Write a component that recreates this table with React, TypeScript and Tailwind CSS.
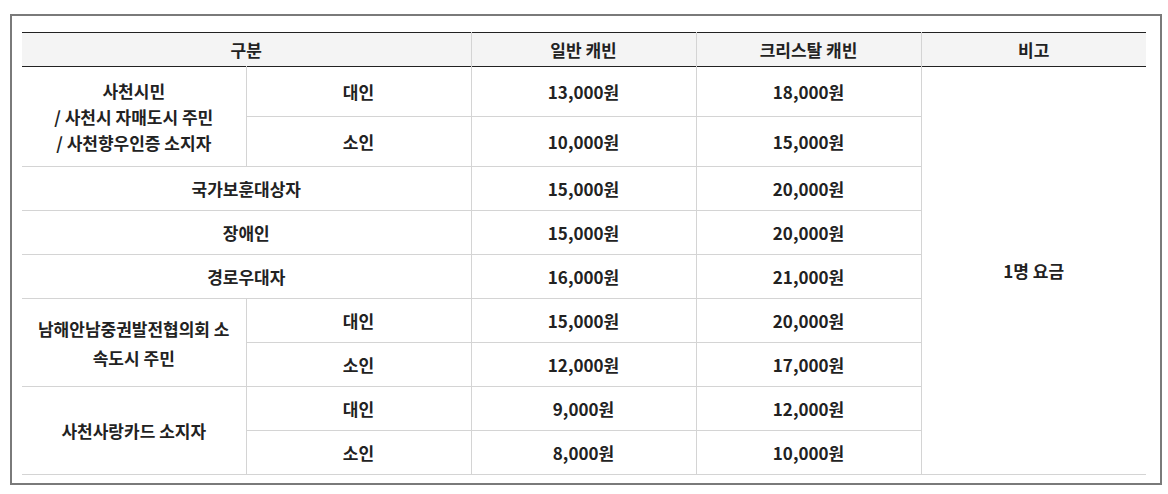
import React from "react";

const font = { fontFamily: '"Noto Sans CJK KR", "Noto Sans", sans-serif' };

export default function App() {
  const cell = "border-r border-[#d4d4d4] text-center align-middle";
  return (
    <div className="bg-white w-[1168px] h-[494px] pt-[14px] pl-[10px]" style={font}>
      <div className="w-[1152px] h-[471px] border-2 border-[#7a7a7a] pt-[16px] pl-[10px]">
        <table className="w-[1124px] table-fixed border-collapse text-[17px] font-bold text-[#222]">
          <colgroup>
            <col className="w-[224px]" />
            <col className="w-[225px]" />
            <col className="w-[225px]" />
            <col className="w-[225px]" />
            <col className="w-[225px]" />
          </colgroup>
          <thead>
            <tr className="h-[34px] bg-[#f4f4f4] border-t border-b border-[#222]">
              <th colSpan={2} className="border-r border-[#d4d4d4] font-bold">구분</th>
              <th className="border-r border-[#d4d4d4] font-bold">일반 캐빈</th>
              <th className="border-r border-[#d4d4d4] font-bold">크리스탈 캐빈</th>
              <th className="font-bold">비고</th>
            </tr>
          </thead>
          <tbody>
            <tr className="h-[50px] border-b border-[#d4d4d4]">
              <td rowSpan={2} className={`${cell} leading-[26px]`}>
                사천시민
                <br />/ 사천시 자매도시 주민
                <br />/ 사천향우인증 소지자
              </td>
              <td className={cell}>대인</td>
              <td className={cell}>13,000원</td>
              <td className={cell}>18,000원</td>
              <td rowSpan={9} className="text-center align-middle">1명 요금</td>
            </tr>
            <tr className="h-[50px] border-b border-[#d4d4d4]">
              <td className={cell}>소인</td>
              <td className={cell}>10,000원</td>
              <td className={cell}>15,000원</td>
            </tr>
            <tr className="h-[44px] border-b border-[#d4d4d4]">
              <td colSpan={2} className={cell}>국가보훈대상자</td>
              <td className={cell}>15,000원</td>
              <td className={cell}>20,000원</td>
            </tr>
            <tr className="h-[44px] border-b border-[#d4d4d4]">
              <td colSpan={2} className={cell}>장애인</td>
              <td className={cell}>15,000원</td>
              <td className={cell}>20,000원</td>
            </tr>
            <tr className="h-[44px] border-b border-[#d4d4d4]">
              <td colSpan={2} className={cell}>경로우대자</td>
              <td className={cell}>16,000원</td>
              <td className={cell}>21,000원</td>
            </tr>
            <tr className="h-[44px] border-b border-[#d4d4d4]">
              <td rowSpan={2} className={`${cell} leading-[29px] px-[12px] break-all`}>
                남해안남중권발전협의회 소속도시 주민
              </td>
              <td className={cell}>대인</td>
              <td className={cell}>15,000원</td>
              <td className={cell}>20,000원</td>
            </tr>
            <tr className="h-[44px] border-b border-[#d4d4d4]">
              <td className={cell}>소인</td>
              <td className={cell}>12,000원</td>
              <td className={cell}>17,000원</td>
            </tr>
            <tr className="h-[44px] border-b border-[#d4d4d4]">
              <td rowSpan={2} className={cell}>사천사랑카드 소지자</td>
              <td className={cell}>대인</td>
              <td className={cell}>9,000원</td>
              <td className={cell}>12,000원</td>
            </tr>
            <tr className="h-[44px] border-b border-[#d4d4d4]">
              <td className={cell}>소인</td>
              <td className={cell}>8,000원</td>
              <td className={cell}>10,000원</td>
            </tr>
          </tbody>
        </table>
      </div>
    </div>
  );
}
